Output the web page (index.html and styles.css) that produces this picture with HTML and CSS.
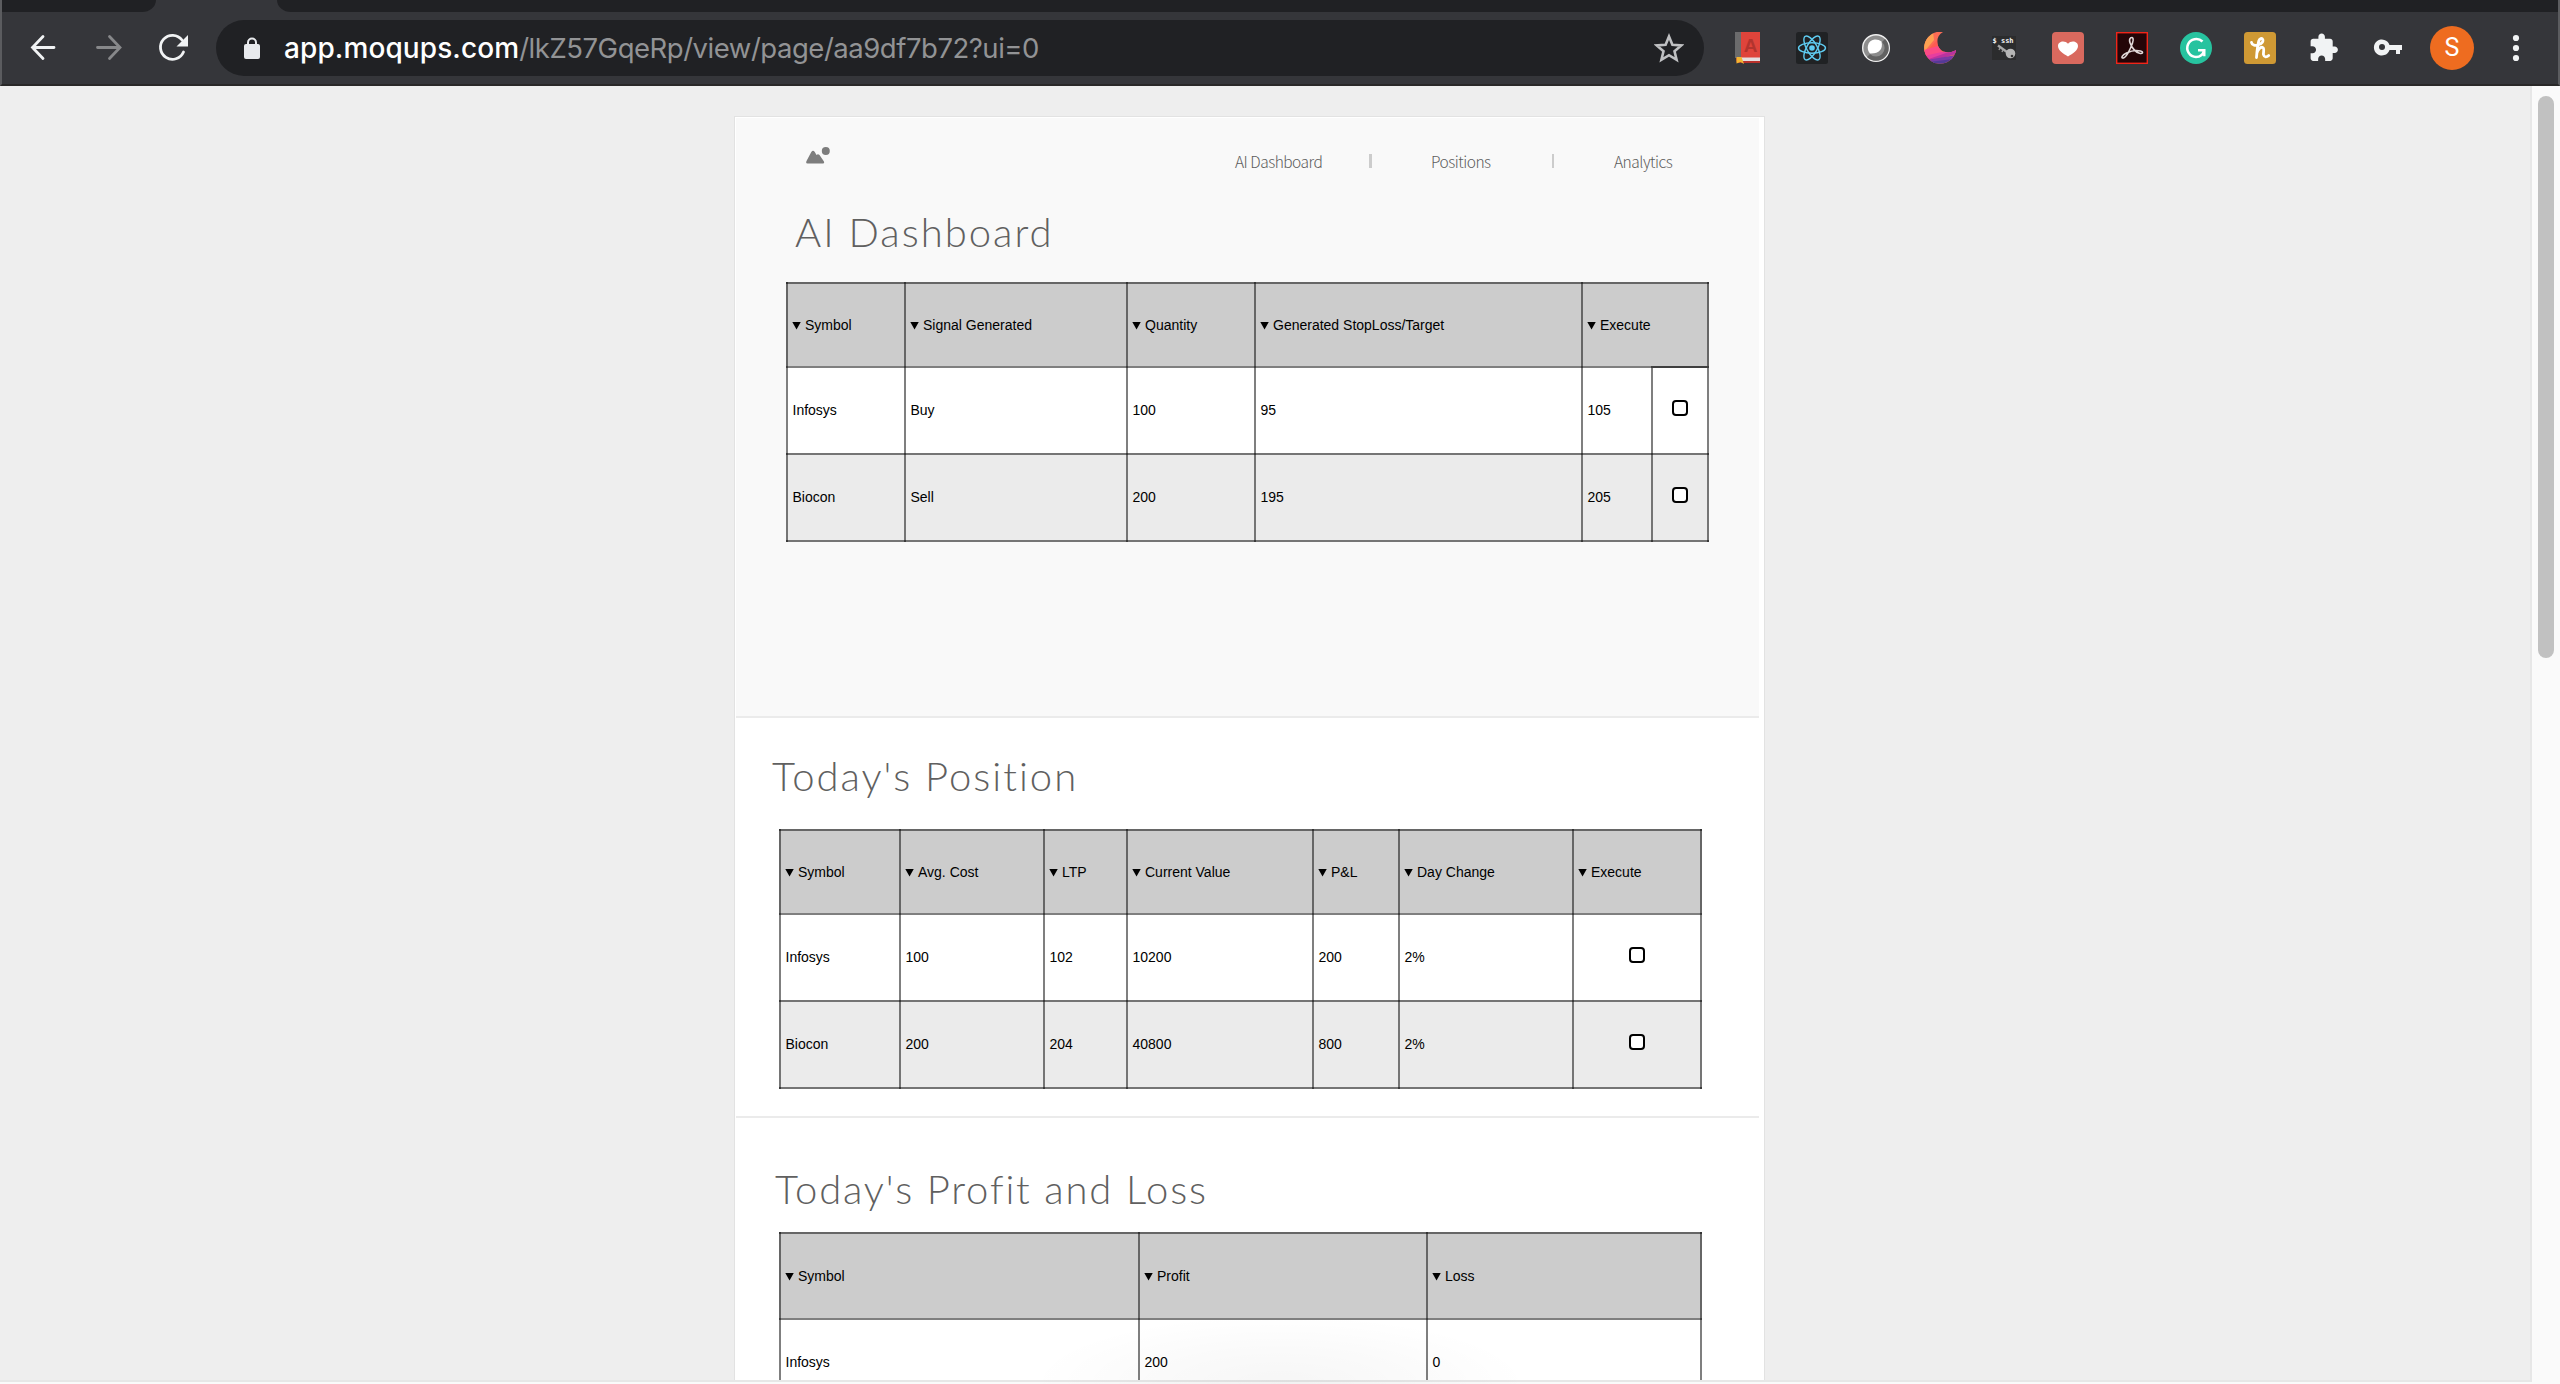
FILE: index.html
```
<!DOCTYPE html>
<html lang="en">
<head>
<meta charset="utf-8">
<title>AI Dashboard</title>
<link rel="stylesheet" href="styles.css">
</head>
<body>
<div class="window">
  <header class="chrome">
    <div class="tabstrip"><div class="tabs-left"></div><div class="tab-active"></div><div class="tabs-right"></div></div>
    <div class="toolbar">
      <svg class="nav-icons" viewBox="0 0 216 72" fill="none" stroke-width="2.800" stroke-linecap="round">
        <path d="M52 36H30.500M41 25L30.500 36l10.500 11" transform="translate(0 -.5)" stroke="#f1f3f4"/>
        <path d="M95.500 35.500h22M107.500 24.500l10.500 11-10.500 11" stroke="#87888a"/>
        <path d="M182 40A12 12 0 1 1 180.500 28" transform="translate(-.5 0)" stroke="#f1f3f4"/>
        <path d="M186 23v11.500h-11.500z" fill="#f1f3f4"/>
      </svg>
      <div class="omnibox">
        <svg class="lock" viewBox="0 0 16 22"><rect y="7" width="16" height="15" rx="2" fill="#e8eaed"/><path d="M4 8V5.500a4 4 0 0 1 8 0V8" fill="none" stroke="#e8eaed" stroke-width="2"/></svg>
        <div class="url"><b class="host">app.moqups.com</b><span class="path">/lkZ57GqeRp/view/page/aa9df7b72?ui=0</span></div>
        <svg class="star" viewBox="0 0 30 30"><path d="M15 3.500l3.400 8.200 8.900.7-6.800 5.800 2.100 8.600L15 22.200l-7.600 4.600 2.100-8.600-6.800-5.800 8.900-.7z" fill="none" stroke="#bfc0c2" stroke-width="2.600"/></svg>
      </div>
      <div class="extensions">
        <svg viewBox="0 0 32 32"><path d="M4 0h24v29H7a3 3 0 0 1-3-3z" fill="#df443b"/><path d="M3 0h6v26H3z" fill="#6b6b6c"/><path d="M4 26h24v5H7a3 3 0 0 1-3-3z" fill="#b8312b"/><path d="M9 25.500h19v3.500H9z" fill="#e4dfe0"/><path d="M4.500 25h5l2.500 7-3.500-2-4 1.500z" fill="#f2b632"/><text x="18.500" y="20" class="book-letter">A</text></svg>
        <svg viewBox="0 0 32 32"><rect width="32" height="32" rx="2.500" fill="#202224"/><g fill="none" stroke="#5fcdf2" stroke-width="1.400"><ellipse cx="16" cy="16" rx="13.500" ry="5.200"/><ellipse cx="16" cy="16" rx="13.500" ry="5.200" transform="rotate(60 16 16)"/><ellipse cx="16" cy="16" rx="13.500" ry="5.200" transform="rotate(120 16 16)"/></g><circle cx="16" cy="16" r="2.800" fill="#5fcdf2"/></svg>
        <svg viewBox="0 0 32 32"><circle cx="16" cy="16" r="13.300" fill="#8e8e8e" stroke="#f0f0f0" stroke-width="1.400"/><path d="M25 7A12.500 12.500 0 0 1 7 25z" fill="#626262"/><circle cx="16" cy="16" r="8.600" fill="#8b8b8b"/><path d="M21.500 9.500c2 8-3 12.500-11.500 12-4-4-3-13 4.500-14 2.700-.3 5 .5 7 2z" fill="#fff"/></svg>
        <svg viewBox="0 0 32 32"><defs><clipPath id="crescent"><path d="M19 0A16 16 0 1 0 32 18C25 23 15 20 13.500 12 12.600 7 14.500 2.500 19 0z"/></clipPath></defs><g clip-path="url(#crescent)"><path fill="#fb6b55" d="M0 0h32v32H0z"/><path fill="#fca252" d="M0 20V4l9-4 1 8z"/><path fill="#fe5a52" d="M0 22l13-14 3 6-16 12z"/><path fill="#fb4a86" d="M0 18l14-4 5 7-19 4z"/><path fill="#e53ea0" d="M0 24l18-4 14-3v4L2 28z"/><path fill="#b9339f" d="M2 28l20-7 10-3v4L5 30z"/><path fill="#7c3aa6" d="M3 28l29-5v4L8 32z"/><path fill="#543a96" d="M4 30l26-3v5H6z"/></g></svg>
        <svg viewBox="0 0 32 32"><path fill="#2b2c2d" d="M4 4h24v24H4z"/><text x="4.500" y="10.500" class="ssh-label">$ ssh</text><path d="M10 13.500l11 8" stroke="#a9a9a9" stroke-width="2.400"/><path d="M12 16l-1 2M15 18l-1 2" stroke="#999" stroke-width="1.500"/><circle cx="22.500" cy="21.500" r="4.800" fill="#b5b5b5"/><circle cx="24" cy="24" r="1.300" fill="#333"/></svg>
        <svg viewBox="0 0 32 32"><rect width="32" height="32" rx="4" fill="#d9695e"/><path d="M16 24.500C11 21.500 6 18.500 6 14 6 9 13 8 16 11.800c3-3.800 10-2.800 10 2.200 0 4.500-5 7.500-10 10.500z" fill="#fff"/></svg>
        <svg viewBox="0 0 32 32"><rect x=".7" y=".7" width="30.600" height="30.600" fill="#240508" stroke="#f02519" stroke-width="1.400"/><path d="M14.500 6c2.500-1.500 3.500 1 2 5-2 6-6 14-9 15-3 .5-1.500-3 3-5 5-2.300 10-3 14-2 3.500 1 2 3-1 2.300-4-1-8-6-9.500-10.500-.8-2.500-.5-4 .5-4.800z" fill="none" stroke="#e2d8d9" stroke-width="1.600"/></svg>
        <svg viewBox="0 0 32 32"><circle cx="16" cy="16" r="16" fill="#27c39f"/><path d="M22.500 9.500A9 9 0 1 0 16 25c4 0 7-2 8-6.500" fill="none" stroke="#fff" stroke-width="2.600"/><path d="M18 18.200h6.300v6" fill="none" stroke="#fff" stroke-width="2.400"/></svg>
        <svg viewBox="0 0 32 32"><rect width="32" height="32" rx="3.500" fill="#cf9934"/><path d="M7.500 10.500c.5 3 4 3.500 7 2.300 3-1.200 5-3.300 4.300-5.300-.8-1.700-3.300-1-4 1.500-1.300 4.500-1.800 10-2.300 16.500M12.800 21.500c1-4 3.500-6.700 5.700-6.200 2.500.6.500 5.200 1 7.500.6 2.600 3.200 2.600 5.200.7" fill="none" stroke="#fff" stroke-width="2.800" stroke-linecap="round"/></svg>
        <svg viewBox="0 0 32 32"><path transform="translate(0 .3) scale(1.300)" d="M20.500 11H19V7c0-1.100-.9-2-2-2h-4V3.500C13 2.120 11.880 1 10.500 1S8 2.120 8 3.500V5H4c-1.100 0-1.990.9-1.990 2v3.800H3.500c1.490 0 2.700 1.210 2.700 2.700s-1.210 2.700-2.700 2.700H2V20c0 1.100.9 2 2 2h3.800v-1.500c0-1.490 1.210-2.700 2.700-2.700 1.490 0 2.700 1.210 2.700 2.700V22H17c1.100 0 2-.9 2-2v-4h1.500c1.380 0 2.500-1.120 2.500-2.500S21.880 11 20.500 11z" fill="#f1f3f4"/></svg>
        <svg viewBox="0 0 32 32"><path d="M17.500 13A8 8 0 1 0 17.500 18H24v4h4v-4h2v-5z" fill="#f1f3f4"/><circle cx="10" cy="15" r="3" fill="#35363a"/></svg>
      </div>
      <div class="avatar">S</div>
      <svg class="menu" viewBox="0 0 8 28"><circle cx="4" cy="4" r="3.100"/><circle cx="4" cy="14" r="3.100"/><circle cx="4" cy="24" r="3.100"/></svg>
    </div>
  </header>

  <div class="viewport">
    <main class="canvas">
      <article class="page">
        <section class="block block-dashboard">
          <div class="topbar">
            <svg class="logo" viewBox="0 0 24 17"><path d="M1.500 16.500Q-.5 16.500.5 14L5.300 5Q7 2.500 8.800 5l1.700 3q1.500-1.500 3 0l4.300 6.300q1 2.200-.8 2.200z" fill="#7d7d7d"/><circle cx="19.800" cy="4" r="4" fill="#7d7d7d"/></svg>
            <nav class="menu-links"><a class="l1">AI Dashboard</a><i class="sep"></i><a class="l2">Positions</a><i class="sep thin"></i><a class="l3">Analytics</a></nav>
          </div>
          <h1 class="title">AI Dashboard</h1>
          <div class="table t1">
            <div class="row head"><div class="cell">Symbol</div><div class="cell">Signal Generated</div><div class="cell">Quantity</div><div class="cell">Generated StopLoss/Target</div><div class="cell span">Execute</div></div>
            <div class="row"><div class="cell">Infosys</div><div class="cell">Buy</div><div class="cell">100</div><div class="cell">95</div><div class="cell">105</div><div class="cell check top"><span class="box"></span></div></div>
            <div class="row alt last"><div class="cell">Biocon</div><div class="cell">Sell</div><div class="cell">200</div><div class="cell">195</div><div class="cell">205</div><div class="cell check"><span class="box"></span></div></div>
          </div>
        </section>
        <section class="block block-position">
          <h2 class="title">Today's Position</h2>
          <div class="table t2">
            <div class="row head"><div class="cell">Symbol</div><div class="cell">Avg. Cost</div><div class="cell">LTP</div><div class="cell">Current Value</div><div class="cell">P&amp;L</div><div class="cell">Day Change</div><div class="cell">Execute</div></div>
            <div class="row"><div class="cell">Infosys</div><div class="cell">100</div><div class="cell">102</div><div class="cell">10200</div><div class="cell">200</div><div class="cell">2%</div><div class="cell check"><span class="box"></span></div></div>
            <div class="row alt last"><div class="cell">Biocon</div><div class="cell">200</div><div class="cell">204</div><div class="cell">40800</div><div class="cell">800</div><div class="cell">2%</div><div class="cell check"><span class="box"></span></div></div>
          </div>
        </section>
        <section class="block block-profit">
          <h2 class="title">Today's Profit and Loss</h2>
          <div class="table t3">
            <div class="row head"><div class="cell">Symbol</div><div class="cell">Profit</div><div class="cell">Loss</div></div>
            <div class="row"><div class="cell">Infosys</div><div class="cell">200</div><div class="cell">0</div></div>
          </div>
        </section>
      </article>
    </main>
    <aside class="scrollbar"><div class="thumb"></div></aside>
  </div>
  <div class="dock-shade"></div>
</div>
</body>
</html>
```
FILE: styles.css
```
* { box-sizing: border-box; }
body { margin: 0; background: #fafafa; font-family: "Liberation Sans", Arial, sans-serif; }
.window { position: relative; width: 2560px; height: 1384px; overflow: hidden; display: flex; flex-direction: column; }
svg { display: block; flex: none; }

/* Browser chrome */
.chrome { height: 86px; background: #35363a; border-left: 2px solid #5b5c5f; border-right: 2px solid #5b5c5f; border-bottom: 2px solid #292828; flex: none; }
.tabstrip { height: 12px; display: flex; }
.tabs-left { width: 154px; background: #202124; border-bottom-right-radius: 14px 12px; }
.tab-active { width: 121px; }
.tabs-right { flex: 1; background: #202124; border-bottom-left-radius: 14px 12px; }
.toolbar { height: 72px; display: flex; align-items: center; }
.nav-icons { width: 216px; height: 72px; }
.omnibox { width: 1488px; height: 56px; margin-left: -2px; border-radius: 28px; background: #202124; display: flex; align-items: center; padding: 0 20px 0 28px; flex: none; }
.lock { width: 16px; height: 22px; }
.url { margin-left: 24px; flex: 1; white-space: nowrap; font: 400 28px/56px Inter, Roboto, sans-serif; letter-spacing: .1px; color: #929395; }
.host { font-weight: 500; color: #fff; }
.path { font-size: 27.500px; letter-spacing: -.47px; }
.star { width: 30px; height: 30px; }
.extensions { display: flex; gap: 32px; margin-left: 28px; }
.extensions svg { width: 32px; height: 32px; }
.book-letter { font: bold 19px "Liberation Sans", sans-serif; text-anchor: middle; fill: #b2342e; }
.ssh-label { font: bold 7px "DejaVu Sans Mono", monospace; fill: #f4f4f4; }
.avatar { width: 44px; height: 44px; margin-left: 26px; border-radius: 50%; background: #ee6c20; color: #fff; font: 400 25px/44px Roboto, sans-serif; text-align: center; }
.menu { width: 8px; height: 28px; margin-left: 38px; fill: #f1f3f4; }

/* Page area */
.viewport { height: 1296px; display: flex; flex: none; }
.canvas { width: 2532px; height: 1296px; overflow: hidden; background: #eee; border: solid #e7e7e7; border-width: 0 2px 2px 0; padding: 30px 0 0 734px; }
.scrollbar { width: 26px; background: #fafafa; padding: 10px 4px 0 6px; }
.thumb { width: 16px; height: 562px; border-radius: 8px; background: #c1c1c1; }
.page { width: 1031px; height: 1400px; background: #fff; border: 1px solid #e2e2e2; padding: 1px 5px 0 1px; }
.block { display: flow-root; border-bottom: 2px solid #ebebeb; }
.block-dashboard { height: 600px; background: #f9f9f9; }
.block-position { height: 400px; }
.title { margin: 0; font: 300 40px/48px Lato, sans-serif; letter-spacing: 2px; color: #606060; white-space: nowrap; }
.topbar { height: 88px; padding: 29px 86px 0 70px; display: flex; justify-content: space-between; }
.logo { width: 24px; height: 17px; }
.menu-links { display: flex; height: 24px; margin-top: 3px; font: 300 15.500px/23px "Noto Sans CJK SC", "Noto Sans", sans-serif; letter-spacing: -.5px; color: #5c5c5c; white-space: nowrap; }
.l1 { width: 86px; }
.l2 { width: 59px; }
.l3 { width: 59px; }
.sep { width: 3px; height: 14px; margin: 4px 59px 0 48px; background: #ccc; }
.sep.thin { width: 2px; margin: 4px 60px 0 62px; }
.block-dashboard .title { padding: 1.500px 0 0 59px; }
.block-position .title { padding: 34px 0 0 36px; }
.block-profit .title { padding: 47px 0 0 39px; letter-spacing: 1.830px; }

/* Wireframe tables: translucent rules that darken where they cross */
.table { --rule: rgba(0, 0, 0, .5); font-size: 14px; color: #000; }
.row { position: relative; display: grid; background: #fff; height: 87px; }
.row::before { content: ""; position: absolute; inset: 0 0 auto; height: 2px; background: var(--rule); }
.row.head { background: #ccc; height: 84px; }
.row.alt { background: #ebebeb; }
.row.last { height: 89px; }
.row.last::after { content: ""; position: absolute; inset: auto 0 0; height: 2px; background: var(--rule); }
.cell { display: flex; align-items: center; border-left: 2px solid var(--rule); padding: 0 0 0 4.500px; white-space: nowrap; }
.cell:last-child { border-right: 2px solid var(--rule); }
.row.last .cell { padding-bottom: 2px; }
.row.head .cell { padding-top: 2px; }
.head .cell::before { content: ""; width: 9px; height: 8px; margin: 1px 4px 0 -.5px; background: #000; clip-path: polygon(0 0, 100% 0, 50% 100%); }
.cell.check { justify-content: center; padding: 2px 0 0; }
.row.last .cell.check { padding-bottom: 2px; }
.cell.check.top { border-top: 2px solid var(--rule); padding-top: 0; }
.box { width: 16px; height: 16px; margin-bottom: 6px; border: 2px solid #000; border-radius: 4px; background: #fff; }
.t1 { width: 923px; margin: 26.500px 0 0 50px; }
.t1 .row { grid-template-columns: 118px 222px 128px 327px 70px 58px; }
.t1 .span { grid-column: 5 / 7; }
.t2 { width: 923px; margin: 29px 0 0 43px; }
.t2 .row { grid-template-columns: 120px 144px 83px 186px 86px 174px 130px; }
.t3 { width: 923px; margin: 19px 0 0 43px; }
.t3 .row { grid-template-columns: 359px 288px 276px; }
.t3 .head { height: 86px; }

.dock-shade { position: absolute; left: 1030px; top: 1314px; width: 500px; height: 70px; background: radial-gradient(ellipse 50% 100% at 50% 100%, rgba(0, 0, 0, .035), rgba(0, 0, 0, .02) 50%, transparent); }
```
